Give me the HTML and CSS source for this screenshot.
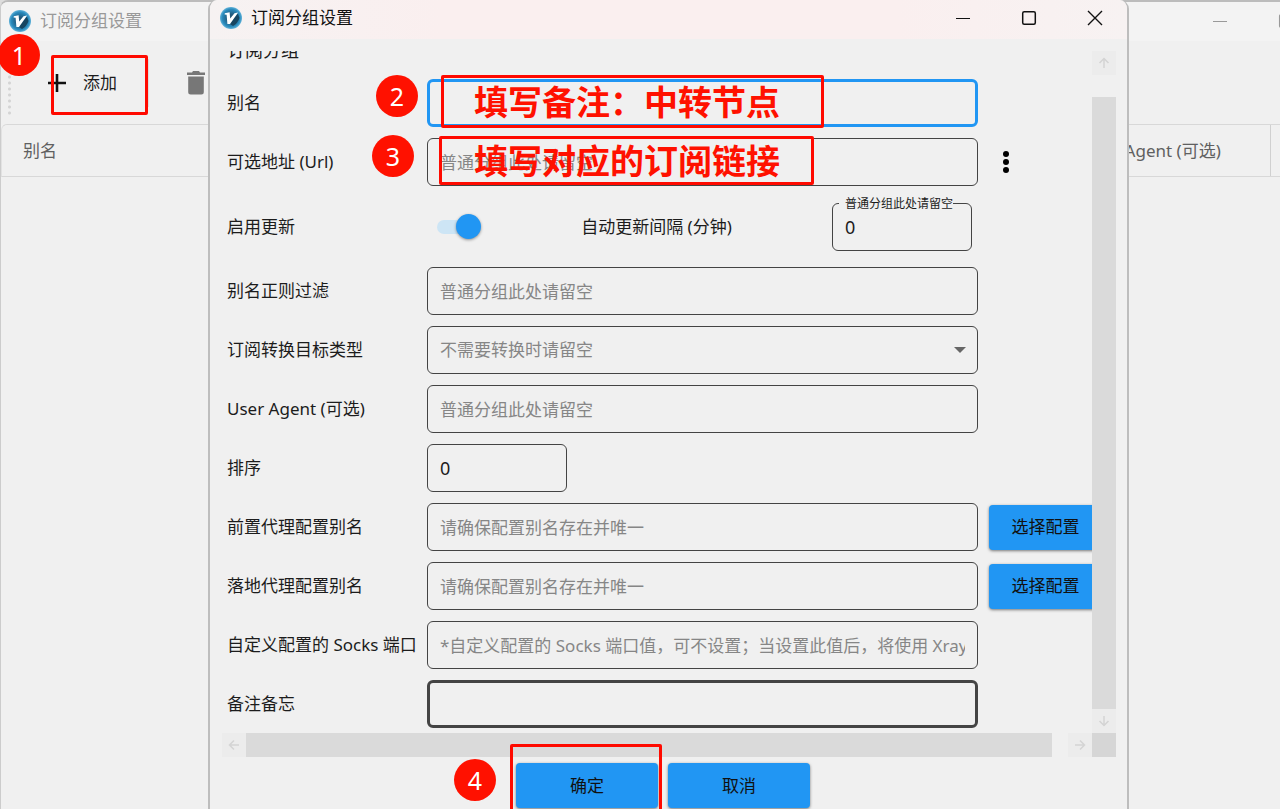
FILE: index.html
```html
<!DOCTYPE html>
<html lang="zh-CN">
<head>
  <meta charset="UTF-8" />
  <meta name="viewport" content="width=device-width, initial-scale=1.0"/>
  <title>订阅分组设置</title>
  <link rel="stylesheet" href="styles.css">
</head>
<body>

<svg class="defs" aria-hidden="true">
  <defs>
    <radialGradient id="logo-fill">
      <stop offset="0.3" stop-color="#22587a"/>
      <stop offset="0.8" stop-color="#2a8bbd"/>
      <stop offset="1" stop-color="#62b2d8"/>
    </radialGradient>
    <symbol id="logo" viewBox="0 0 22 22">
      <circle cx="11" cy="11" r="11" fill="url(#logo-fill)"/>
      <path d="M17.800 6.500L10 17l3 2q5-3 6.500-8z" fill="#174560"/>
      <path d="M4.800 6.200L9.600 5.200l.6 6.300 4.300-5.300 3.600-.6L10 17H7.400L6.600 7.800l-2-.3z" fill="#fff"/>
    </symbol>
    <symbol id="minimize" viewBox="0 0 16 16">
      <path d="M1 8.500h14" stroke="currentColor" fill="none"/>
    </symbol>
    <symbol id="maximize" viewBox="0 0 16 16">
      <rect x="1.700" y="1.700" width="12.600" height="12.600" rx="1.500" stroke="currentColor" stroke-width="1.500" fill="none"/>
    </symbol>
    <symbol id="close" viewBox="0 0 16 16">
      <path d="M1 1l14 14M15 1L1 15" stroke="currentColor" stroke-width="1.400" fill="none"/>
    </symbol>
    <symbol id="arrow" viewBox="0 0 12 12">
      <path d="M6 11V1.500M1.500 6L6 1.500 10.500 6" stroke="currentColor" stroke-width="1.500" fill="none"/>
    </symbol>
  </defs>
</svg>

<main class="window">
  <header class="titlebar">
    <svg class="logo"><use href="#logo"/></svg>
    <h1>订阅分组设置</h1>
    <div class="window-buttons">
      <button aria-label="最小化"><svg><use href="#minimize"/></svg></button>
      <button aria-label="最大化"><svg><use href="#maximize"/></svg></button>
      <button aria-label="关闭"><svg><use href="#close"/></svg></button>
    </div>
  </header>

  <div class="toolbar">
    <span class="grip"></span>
    <button class="tool add">
      <svg viewBox="0 0 18 18"><path d="M9 0v18M0 9h18" stroke="#111" stroke-width="2.600"/></svg>
      添加
    </button>
    <button class="tool remove" aria-label="删除">
      <svg viewBox="0 0 18 24"><path d="M0 1.500h5L6 0h6l1 1.500h5V4H0zM1.200 5.500h15.600V21q0 2.500-2.500 2.500H3.700Q1.200 23.500 1.200 21z" fill="#777"/></svg>
    </button>
  </div>

  <table class="groups">
    <thead>
      <tr><th>别名</th><th class="agent">User Agent (可选)</th><th class="rest"></th></tr>
    </thead>
  </table>
</main>

<section class="dialog" role="dialog" aria-labelledby="dialog-title">
  <header class="titlebar">
    <svg class="logo"><use href="#logo"/></svg>
    <h2 id="dialog-title">订阅分组设置</h2>
    <div class="window-buttons">
      <button aria-label="最小化"><svg><use href="#minimize"/></svg></button>
      <button aria-label="最大化"><svg><use href="#maximize"/></svg></button>
      <button aria-label="关闭"><svg><use href="#close"/></svg></button>
    </div>
  </header>

  <div class="scroll-area">
    <div class="viewport">
      <form class="form" id="group-form">
        <h3>订阅分组</h3>
        <div class="row">
          <label for="alias">别名</label>
          <input class="field focused" id="alias" type="text">
        </div>
        <div class="row">
          <label for="url">可选地址 (Url)</label>
          <input class="field" id="url" type="text" placeholder="普通分组此处请留空">
          <button class="more" type="button" aria-label="更多">
            <svg viewBox="0 0 6 24"><circle cx="3" cy="4" r="3"/><circle cx="3" cy="12" r="3"/><circle cx="3" cy="20" r="3"/></svg>
          </button>
        </div>
        <div class="row update-row">
          <label for="enabled">启用更新</label>
          <div class="update">
            <input class="switch" id="enabled" type="checkbox" checked>
            <label for="interval">自动更新间隔 (分钟)</label>
            <div class="outlined">
              <input class="field number" id="interval" type="text" value="0">
              <span class="hint">普通分组此处请留空</span>
            </div>
          </div>
        </div>
        <div class="row">
          <label for="filter">别名正则过滤</label>
          <input class="field" id="filter" type="text" placeholder="普通分组此处请留空">
        </div>
        <div class="row">
          <label for="target">订阅转换目标类型</label>
          <div class="select">
            <select class="field" id="target"><option>不需要转换时请留空</option></select>
            <svg viewBox="0 0 12 6"><path d="M0 0h12L6 6z" fill="#666"/></svg>
          </div>
        </div>
        <div class="row">
          <label for="agent">User Agent (可选)</label>
          <input class="field" id="agent" type="text" placeholder="普通分组此处请留空">
        </div>
        <div class="row">
          <label for="sort">排序</label>
          <input class="field number" id="sort" type="text" value="0">
        </div>
        <div class="row">
          <label for="prev">前置代理配置别名</label>
          <input class="field" id="prev" type="text" placeholder="请确保配置别名存在并唯一">
          <button class="primary" type="button">选择配置</button>
        </div>
        <div class="row">
          <label for="next">落地代理配置别名</label>
          <input class="field" id="next" type="text" placeholder="请确保配置别名存在并唯一">
          <button class="primary" type="button">选择配置</button>
        </div>
        <div class="row">
          <label for="port">自定义配置的 Socks 端口</label>
          <input class="field" id="port" type="text" placeholder="*自定义配置的 Socks 端口值，可不设置；当设置此值后，将使用 Xray/sing-box">
        </div>
        <div class="row">
          <label for="memo">备注备忘</label>
          <input class="field memo" id="memo" type="text">
        </div>
      </form>
    </div>
    <div class="scrollbar vertical">
      <span class="step"><svg><use href="#arrow"/></svg></span>
      <span class="thumb"></span>
      <span class="step"><svg class="down"><use href="#arrow"/></svg></span>
    </div>
    <div class="scrollbar horizontal">
      <span class="step"><svg class="left"><use href="#arrow"/></svg></span>
      <span class="thumb"></span>
      <span class="step"><svg class="right"><use href="#arrow"/></svg></span>
    </div>
    <div class="corner"></div>
  </div>

  <footer class="actions">
    <button class="primary" type="submit" form="group-form">确定</button>
    <button class="primary" type="button">取消</button>
  </footer>
</section>

<!-- tutorial marks over the windows -->
<div class="box box-1"></div>
<div class="box box-2">填写备注：中转节点</div>
<div class="box box-3">填写对应的订阅链接</div>
<div class="box box-4"></div>
<span class="badge badge-1">1</span>
<span class="badge badge-2">2</span>
<span class="badge badge-3">3</span>
<span class="badge badge-4">4</span>

</body>
</html>
```

FILE: styles.css
```css
* { box-sizing: border-box; }

html, body {
  margin: 0; height: 100%;
  overflow: hidden;
}
body {
  position: relative;
  font: 17px/24px "Noto Sans", "Noto Sans CJK SC", sans-serif;
  color: #1c1c1c; background: #ddd;
}
h1, h2, h3 { margin: 0; font-size: 17px; font-weight: 400; }
button, input, select { font: inherit; color: inherit; margin: 0; }
button { padding: 0; border: none; background: none; }
svg { display: block; }
.defs { position: absolute; width: 0; height: 0; }

/* windows */
.window {
  height: 100%; overflow: hidden;
  border-top: 2px solid #bcbcbc; border-left: 1px solid #ccc;
  border-radius: 8px 0 0 0;
  background: #f0f0f0;
}
.titlebar { display: flex; align-items: center; gap: 9px; }
.window .titlebar {
  height: 39px; padding: 0 0 2px 8px; margin-right: -104px;
  background: #f3f3f3; color: #999;
}
.logo { width: 22px; height: 22px; }
.window-buttons { display: flex; gap: 2px; margin-left: auto; }
.window-buttons button { width: 64px; height: 32px; display: grid; place-items: center; }
.window-buttons svg { width: 16px; height: 16px; }

.toolbar { display: flex; align-items: center; height: 83px; padding-left: 7px; }
.grip {
  width: 3px; height: 66px;
  background: radial-gradient(circle, #d4d4d4 1px, transparent 2px) 0 0 / 3px 6px;
}
.tool { display: flex; align-items: center; height: 48px; }
.tool svg { width: 18px; }
.add { gap: 17px; padding: 0 31px; margin-left: 6px; border-right: 1px solid #ddd; }
.remove { padding: 0 38px; }

.groups {
  width: 100%; table-layout: fixed;
  border: 1px solid #d8d8d8; border-left-color: #e2e2e2;
  border-radius: 6px 0 0 0; border-spacing: 0; border-right: none;
}
.groups th {
  height: 51px; padding: 0 21px;
  font-weight: 400; text-align: left; white-space: nowrap; color: #606060;
}
.groups .agent { width: 209px; border-right: 1px solid #d0d0d0; }
.groups .rest { width: 9px; padding: 0; }

.dialog {
  position: absolute; top: 0; bottom: 0; left: 208px; right: 151px;
  display: flex; flex-direction: column; overflow: hidden;
  border: solid #bdbdbd; border-width: 0 2px;
  border-radius: 9px 9px 0 0;
  background: #f0f0f0;
}
.dialog .titlebar {
  height: 39px; padding: 0 0 3px 10px;
  background: linear-gradient(90deg, #f6f2f2, #faefef 25%, #faefef 75%, #f7f2f2);
  color: #111;
}

/* scroll area */
.scroll-area {
  flex: 1; min-height: 0;
  display: grid; grid-template: 1fr 24px / 1fr 24px;
  margin: 12px 11px 0 12px;
}
.viewport { overflow: hidden; }
.scrollbar { display: flex; color: #d4d4d4; }
.scrollbar .step { width: 24px; height: 24px; display: grid; place-items: center; background: #ececec; }
.scrollbar svg { width: 12px; height: 12px; }
.scrollbar .thumb { flex: 1; background: #dadada; }
.vertical { flex-direction: column; }
.vertical .thumb { margin-top: 22px; }
.horizontal .thumb { margin-right: 16px; }
.down { transform: rotate(180deg); }
.left { transform: rotate(-90deg); }
.right { transform: rotate(90deg); }
.corner { background: #d6d6d6; }

/* form */
.form {
  display: flex; flex-direction: column; gap: 11px;
  width: calc(100% + 10px);
  margin-top: -13px; padding-left: 5px;
}
.form h3 { font-size: 18px; margin-bottom: 6px; }
.row {
  display: grid; grid-template-columns: 200px 1fr 124px;
  align-items: center;
  height: 48px;
}
.row label { white-space: nowrap; }
.field {
  width: 100%; height: 48px; padding: 0 12px;
  border: 1px solid #444; border-radius: 6px;
  background: transparent; outline: none;
}
.field::placeholder { color: #868686; opacity: 1; }
.focused { border: 3px solid #2196f3; }
.memo { border: 3px solid #444; }
.number { width: 140px; font-size: 18px; }
.more { width: 34px; height: 34px; margin-left: 11px; display: grid; place-items: center; }
.more svg { width: 6px; height: 24px; }

.update-row { height: 59px; }
.update {
  display: flex; align-items: center; justify-content: space-between;
  padding: 0 6px 0 10px;
}
.switch {
  appearance: none; display: flex; align-items: center; position: relative;
  width: 44px; height: 25px;
}
.switch::before {
  content: ""; width: 36px; height: 14px;
  border-radius: 7px; background: #cde5f5;
}
.switch::after {
  content: ""; position: absolute; right: 0; top: 0;
  width: 25px; height: 25px;
  border-radius: 50%; background: #2196f3;
  box-shadow: 0 1px 3px rgba(0, 0, 0, 0.4);
}
.outlined { position: relative; }
.hint {
  position: absolute; top: -7px; left: 7px;
  padding-left: 6px;
  font-size: 12px; line-height: 16px; white-space: nowrap;
  background: #f0f0f0;
}
.select { position: relative; }
.select select { appearance: none; color: #868686; }
.select svg { position: absolute; right: 12px; top: 21px; width: 12px; height: 6px; }

.primary {
  height: 45px; border-radius: 4px;
  background: #2196f3; color: #111;
  box-shadow: 0 1px 3px rgba(0, 0, 0, 0.5);
}
.row .primary { margin-left: 11px; }
.actions {
  display: flex; justify-content: center; gap: 10px;
  height: 52px; padding: 6px 11px 0 0;
}
.actions .primary { width: 142px; }

/* tutorial marks */
.badge {
  position: absolute; width: 42px; height: 42px;
  border-radius: 50%; background: #ff1100; color: #fff;
  font-size: 25px; line-height: 42px; text-align: center;
}
.badge-1 { left: -2px; top: 34px; }
.badge-2 { left: 376px; top: 75px; }
.badge-3 { left: 372px; top: 135px; }
.badge-4 { left: 454px; top: 759px; }
.box {
  position: absolute;
  border: 3px solid #ff0a00; border-radius: 2px;
  padding-left: 30px;
  font-size: 34px; line-height: 48px; font-weight: 700; color: #ff1100;
  white-space: nowrap;
}
.box-1 { left: 51px; top: 55px; width: 97px; height: 60px; }
.box-2 { left: 441px; top: 75px; width: 383px; height: 53px; }
.box-3 { left: 439px; top: 136px; width: 375px; height: 49px; padding-left: 32px; line-height: 44px; }
.box-4 { left: 510px; top: 744px; width: 152px; height: 70px; }
```
